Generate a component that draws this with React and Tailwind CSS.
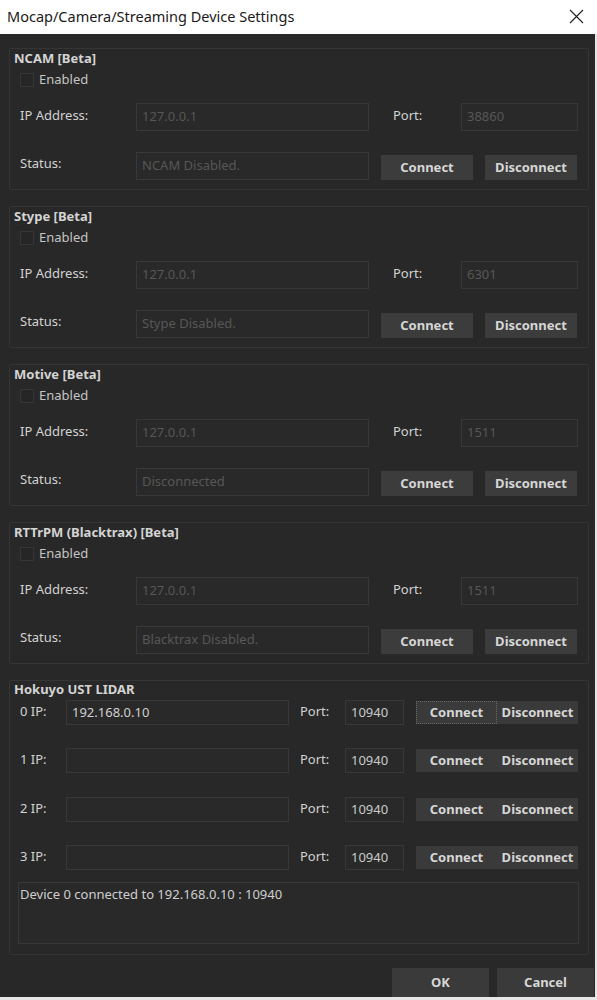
import React from "react";

const label = "text-[13px] text-[#d2d2d2]";
const field = "h-full border border-[#383838] bg-[#292929] flex items-center px-[5px] text-[13px] text-[#575757]";
const btn = "h-[25px] w-[92px] bg-[#3c3c3c] flex items-center justify-center text-[13px] font-bold text-[#d6d6d6]";

function DeviceGroup({ title, ip, port, status }) {
  return (
    <div className="h-[142px] border border-[#353535] rounded-[2px] flex flex-col">
      <div className="h-[18px] leading-[18px] pl-[4px] text-[13px] font-bold text-[#d4d4d4]">{title}</div>
      <div className="mt-[4px] h-[18px] flex items-center pl-[10px]">
        <div className="w-[14px] h-[14px] border border-[#363636] bg-[#262626]" />
        <span className="ml-[5px] text-[13px] text-[#c4c4c4]">Enabled</span>
      </div>
      <div className="mt-[14px] h-[28px] flex items-center pl-[10px]">
        <div className={`${label} w-[116px] -mt-[2px]`}>IP Address:</div>
        <div className={`${field} w-[233px]`}>{ip}</div>
        <div className={`${label} ml-[24px] w-[68px] -mt-[2px]`}>Port:</div>
        <div className={`${field} w-[117px]`}>{port}</div>
      </div>
      <div className="mt-[21px] h-[28px] flex items-center pl-[10px]">
        <div className={`${label} w-[116px] -mt-[4px]`}>Status:</div>
        <div className={`${field} w-[233px]`}>{status}</div>
        <div className="self-end flex">
          <button className={`${btn} ml-[12px]`}>Connect</button>
          <button className={`${btn} ml-[12px]`}>Disconnect</button>
        </div>
      </div>
    </div>
  );
}

function LidarRow({ n, ip, top, focused }) {
  return (
    <div className={`h-[25px] flex items-center pl-[10px] ${top}`}>
      <div className={`${label} w-[46px] -mt-[1px]`}>{n} IP:</div>
      <div className="h-full w-[223px] border border-[#383838] bg-[#292929] flex items-center px-[5px] text-[13px] text-[#d0d0d0]">{ip}</div>
      <div className={`${label} ml-[11px] w-[45px] -mt-[1px]`}>Port:</div>
      <div className="h-full w-[59px] border border-[#383838] bg-[#292929] flex items-center px-[5px] text-[13px] text-[#cacaca]">10940</div>
      <div className="ml-[12px] flex h-[23px]">
        <button className={`w-[81px] h-full bg-[#3a3a3a] flex items-center justify-center text-[13px] font-bold text-[#d6d6d6] ${focused ? "border border-dotted border-[#6a6a6a]" : ""}`}>Connect</button>
        <button className="w-[81px] h-full bg-[#3a3a3a] flex items-center justify-center text-[13px] font-bold text-[#d6d6d6]">Disconnect</button>
      </div>
    </div>
  );
}

export default function App() {
  return (
    <div className="w-[597px] h-[1000px] bg-[#e6e6e6] flex flex-col font-['Noto_Sans',sans-serif]">
      <div className="h-[34px] bg-white flex items-center justify-between pl-[7px] pr-[13px]">
        <span className="text-[14.5px] text-[#1a1a1a]">Mocap/Camera/Streaming Device Settings</span>
        <svg width="15" height="15" viewBox="0 0 15 15" className="mt-[-2px]">
          <path d="M1 1 L14 14 M14 1 L1 14" stroke="#1f1f1f" strokeWidth="1.1" fill="none" />
        </svg>
      </div>
      <div className="h-[963px] mr-[2px] bg-[#282828] flex flex-col pt-[14px] pl-[9px] pr-[1px]">
        <div className="w-[580px] flex flex-col gap-[16px]">
          <DeviceGroup title="NCAM [Beta]" ip="127.0.0.1" port="38860" status="NCAM Disabled." />
          <DeviceGroup title="Stype [Beta]" ip="127.0.0.1" port="6301" status="Stype Disabled." />
          <DeviceGroup title="Motive [Beta]" ip="127.0.0.1" port="1511" status="Disconnected" />
          <DeviceGroup title="RTTrPM (Blacktrax) [Beta]" ip="127.0.0.1" port="1511" status="Blacktrax Disabled." />
          <div className="h-[275px] border border-[#353535] rounded-[2px] flex flex-col">
            <div className="h-[16px] leading-[16px] pl-[4px] text-[13px] font-bold text-[#d4d4d4]">Hokuyo UST LIDAR</div>
            <LidarRow n="0" ip="192.168.0.10" top="mt-[3px]" focused />
            <LidarRow n="1" ip="" top="mt-[23px]" />
            <LidarRow n="2" ip="" top="mt-[24px]" />
            <LidarRow n="3" ip="" top="mt-[23px]" />
            <div className="mt-[12px] ml-[8px] w-[561px] h-[62px] border border-[#383838] bg-[#292929] pl-[1px] pt-[2px] text-[13px] leading-[18px] text-[#cfcfcf]">
              Device 0 connected to 192.168.0.10 : 10940
            </div>
          </div>
        </div>
        <div className="mt-[13px] flex justify-end gap-[8px]">
          <button className="w-[97px] h-[29px] bg-[#3a3a3a] flex items-center justify-center text-[13px] font-bold text-[#d6d6d6]">OK</button>
          <button className="w-[97px] h-[29px] bg-[#3a3a3a] flex items-center justify-center text-[13px] font-bold text-[#d6d6d6]">Cancel</button>
        </div>
      </div>
    </div>
  );
}
